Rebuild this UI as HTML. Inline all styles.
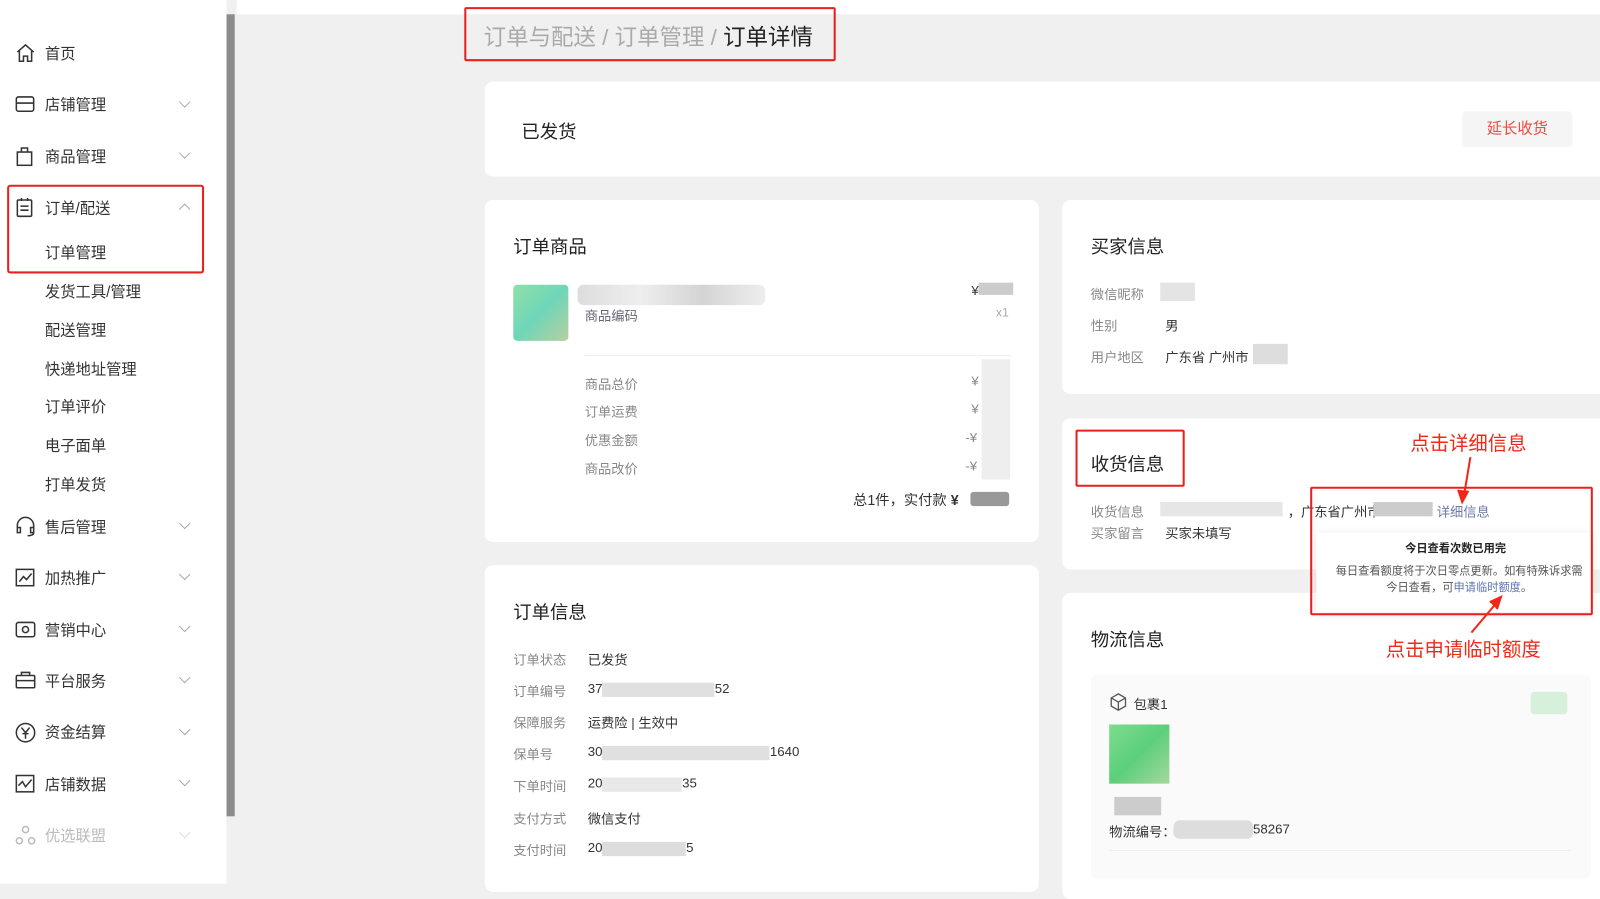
<!DOCTYPE html><html><head><meta charset="utf-8"><style>
*{margin:0;padding:0;box-sizing:border-box}
body{width:1600px;height:866px;overflow:hidden;background:#f0f0f0;font-family:"Liberation Sans","Noto Sans CJK SC",sans-serif;color:#333;position:relative}
#w{position:absolute;left:0;top:0;width:1568px;height:849px;transform:scale(1.0204);transform-origin:0 0;background:#f0f0f0}
.a{position:absolute}
.side{left:0;top:0;width:222px;height:866px;background:#fff}
.bar{left:222px;top:14px;width:8px;height:786px;background:#8c8c8c}
.main{left:232px;top:14px;width:1368px;height:852px;background:#f0f0f0}
.mi{font-size:15px;color:#333}
.card{background:#fff;border-radius:8px}
.t{font-size:18px;color:#222}
.l{font-size:13px;color:#888}
.v{font-size:13px;color:#333}
.blur{background:linear-gradient(90deg,#ddd,#eee,#d4d4d4,#eee);border-radius:6px}
.red{border:2px solid #e82020}
.chev{width:8px;height:8px;border-right:1.3px solid #aaa;border-bottom:1.3px solid #aaa;transform:rotate(45deg)}
</style></head><body><div id="w">
<div class="a side"></div>
<div class="a bar"></div>
<div class="a main"></div>
<svg class="a" style="left:14px;top:42px" width="22" height="20" viewBox="0 0 22 20" fill="none" stroke="#333" stroke-width="1.5"><path d="M3 9 L11 2 L19 9 M5 8 V18 H9 V13 H13 V18 H17 V8"/></svg>
<div class="a mi" style="left:44px;top:42px">首页</div>
<svg class="a" style="left:14px;top:93px" width="22" height="18" fill="none" stroke="#333" stroke-width="1.5"><rect x="2" y="2" width="17" height="14" rx="2"/><path d="M2 8H19"/></svg>
<div class="a mi" style="left:44px;top:92px">店铺管理</div>
<svg class="a" style="left:15px;top:142px" width="20" height="22" fill="none" stroke="#333" stroke-width="1.5"><rect x="2" y="7" width="14" height="13"/><path d="M6 7V3H12V7"/></svg>
<div class="a mi" style="left:44px;top:143px">商品管理</div>
<div class="a red" style="left:7px;top:181px;width:193px;height:87px;border-radius:3px"></div>
<svg class="a" style="left:15px;top:193px" width="20" height="22" fill="none" stroke="#333" stroke-width="1.5"><rect x="2" y="3" width="14" height="16" rx="1"/><path d="M6 1V4M12 1V4M5 9H13M5 13H13"/></svg>
<div class="a mi" style="left:44px;top:193px">订单/配送</div>
<div class="a mi" style="left:44px;top:237px">订单管理</div>
<div class="a mi" style="left:44px;top:275px">发货工具/管理</div>
<div class="a mi" style="left:44px;top:313px">配送管理</div>
<div class="a mi" style="left:44px;top:351px">快递地址管理</div>
<div class="a mi" style="left:44px;top:388px">订单评价</div>
<div class="a mi" style="left:44px;top:426px">电子面单</div>
<div class="a mi" style="left:44px;top:464px">打单发货</div>
<div class="a mi" style="left:44px;top:506px">售后管理</div>
<div class="a mi" style="left:44px;top:556px">加热推广</div>
<div class="a mi" style="left:44px;top:607px">营销中心</div>
<div class="a mi" style="left:44px;top:657px">平台服务</div>
<div class="a mi" style="left:44px;top:707px">资金结算</div>
<div class="a mi" style="left:44px;top:758px">店铺数据</div>
<div class="a mi" style="left:44px;top:808px;color:#bbb">优选联盟</div>
<svg class="a" style="left:14px;top:505px" width="22" height="22" fill="none" stroke="#333" stroke-width="1.5"><path d="M3 13V10A8 8 0 0 1 19 10V13M3 12H6V17H3ZM16 12H19V17H16ZM19 17Q19 20 13 20"/></svg>
<svg class="a" style="left:14px;top:556px" width="22" height="20" fill="none" stroke="#333" stroke-width="1.5"><rect x="2" y="2" width="17" height="16"/><path d="M5 14L9 9L12 12L17 6"/></svg>
<svg class="a" style="left:14px;top:607px" width="22" height="20" fill="none" stroke="#333" stroke-width="1.5"><rect x="2" y="3" width="18" height="14" rx="2"/><circle cx="11" cy="10" r="3"/></svg>
<svg class="a" style="left:14px;top:657px" width="22" height="20" fill="none" stroke="#333" stroke-width="1.5"><rect x="2" y="5" width="18" height="12" rx="1"/><path d="M7 5V2H15V5M2 10H20"/></svg>
<svg class="a" style="left:14px;top:707px" width="22" height="22" fill="none" stroke="#333" stroke-width="1.5"><circle cx="11" cy="11" r="9"/><path d="M7 6L11 11L15 6M11 11V17M8 12H14"/></svg>
<svg class="a" style="left:14px;top:758px" width="22" height="20" fill="none" stroke="#333" stroke-width="1.5"><rect x="2" y="2" width="17" height="16"/><path d="M4 12L8 8L11 13L17 6"/></svg>
<svg class="a" style="left:14px;top:808px" width="22" height="20" fill="none" stroke="#bbb" stroke-width="1.5"><circle cx="11" cy="5" r="3"/><circle cx="5" cy="16" r="3"/><circle cx="17" cy="16" r="3"/></svg>
<div class="a chev" style="left:177px;top:96px"></div>
<div class="a chev" style="left:177px;top:146px"></div>
<div class="a chev" style="left:177px;top:201px;transform:rotate(225deg)"></div>
<div class="a chev" style="left:177px;top:509px"></div>
<div class="a chev" style="left:177px;top:559px"></div>
<div class="a chev" style="left:177px;top:610px"></div>
<div class="a chev" style="left:177px;top:660px"></div>
<div class="a chev" style="left:177px;top:711px"></div>
<div class="a chev" style="left:177px;top:761px"></div>
<div class="a chev" style="left:177px;top:812px;border-color:#ddd"></div>
<div class="a" style="left:232px;top:0;width:1368px;height:14px;background:#fff"></div>
<div class="a red" style="left:455px;top:7px;width:364px;height:53px;border-radius:2px"></div>
<div class="a" style="left:474px;top:19px;font-size:22px;color:#aaa">订单与配送 / 订单管理 / <span style="color:#222">订单详情</span></div>
<div class="a card" style="left:475px;top:80px;width:1100px;height:93px"></div>
<div class="a t" style="left:511px;top:115px">已发货</div>
<div class="a" style="left:1433px;top:109px;width:108px;height:35px;background:#f5f5f5;border-radius:4px;color:#f04b3c;font-size:15px;text-align:center;line-height:35px">延长收货</div>
<div class="a card" style="left:475px;top:196px;width:543px;height:335px"></div>
<div class="a t" style="left:503px;top:228px">订单商品</div>
<div class="a" style="left:503px;top:279px;width:54px;height:55px;border-radius:4px;background:linear-gradient(135deg,#8fe0a8,#6ed6b8,#b9cfa0)"></div>
<div class="a blur" style="left:566px;top:279px;width:184px;height:20px"></div>
<div class="a" style="left:573px;top:299px;font-size:13px;color:#667">商品编码</div>
<div class="a v" style="left:952px;top:277px">¥<span style="display:inline-block;width:34px;height:12px;background:#ccc"></span></div>
<div class="a" style="left:976px;top:299px;font-size:12px;color:#aaa">x1</div>
<div class="a" style="left:573px;top:348px;width:418px;height:1px;background:#eee"></div>
<div class="a l" style="left:573px;top:366px">商品总价</div>
<div class="a l" style="left:573px;top:393px">订单运费</div>
<div class="a l" style="left:573px;top:421px">优惠金额</div>
<div class="a l" style="left:573px;top:449px">商品改价</div>
<div class="a" style="left:962px;top:352px;width:28px;height:118px;background:#eee"></div>
<div class="a l" style="left:952px;top:366px">¥</div><div class="a l" style="left:952px;top:393px">¥</div><div class="a l" style="left:946px;top:421px">-¥</div><div class="a l" style="left:946px;top:449px">-¥</div>
<div class="a" style="left:836px;top:480px;font-size:14px;color:#333">总1件，实付款 <b>¥</b></div>
<div class="a" style="left:951px;top:482px;width:38px;height:14px;background:#999;border-radius:3px"></div>
<div class="a card" style="left:475px;top:554px;width:543px;height:320px"></div>
<div class="a t" style="left:503px;top:586px">订单信息</div>
<div class="a l" style="left:503px;top:636px">订单状态</div><div class="a v" style="left:576px;top:636px">已发货</div>
<div class="a l" style="left:503px;top:667px">订单编号</div><div class="a v" style="left:576px;top:667px">37<span style="display:inline-block;width:110px;height:14px;background:#e0e0e0;vertical-align:middle"></span>52</div>
<div class="a l" style="left:503px;top:698px">保障服务</div><div class="a v" style="left:576px;top:698px">运费险 | 生效中</div>
<div class="a l" style="left:503px;top:729px">保单号</div><div class="a v" style="left:576px;top:729px">30<span style="display:inline-block;width:164px;height:14px;background:#e0e0e0;vertical-align:middle"></span>1640</div>
<div class="a l" style="left:503px;top:760px">下单时间</div><div class="a v" style="left:576px;top:760px">20<span style="display:inline-block;width:78px;height:14px;background:#e8e8e8;vertical-align:middle"></span>35</div>
<div class="a l" style="left:503px;top:792px">支付方式</div><div class="a v" style="left:576px;top:792px">微信支付</div>
<div class="a l" style="left:503px;top:823px">支付时间</div><div class="a v" style="left:576px;top:823px">20<span style="display:inline-block;width:82px;height:14px;background:#ddd;vertical-align:middle"></span>5</div>
<div class="a card" style="left:1041px;top:196px;width:540px;height:190px"></div>
<div class="a t" style="left:1069px;top:228px">买家信息</div>
<div class="a l" style="left:1069px;top:278px">微信昵称</div><div class="a" style="left:1137px;top:277px;width:34px;height:18px;background:#e4e4e4"></div>
<div class="a l" style="left:1069px;top:309px">性别</div><div class="a v" style="left:1142px;top:309px">男</div>
<div class="a l" style="left:1069px;top:340px">用户地区</div><div class="a v" style="left:1142px;top:340px">广东省 广州市</div><div class="a" style="left:1228px;top:337px;width:34px;height:20px;background:#ddd"></div>
<div class="a card" style="left:1041px;top:410px;width:540px;height:148px"></div>
<div class="a red" style="left:1054px;top:421px;width:107px;height:56px;border-radius:2px"></div>
<div class="a t" style="left:1069px;top:441px">收货信息</div>
<div class="a l" style="left:1069px;top:491px">收货信息</div>
<div class="a" style="left:1137px;top:492px;width:120px;height:14px;background:#e6e6e6"></div>
<div class="a v" style="left:1262px;top:491px">，广东省广州市</div>
<div class="a" style="left:1346px;top:492px;width:58px;height:14px;background:#ccc"></div>
<div class="a" style="left:1408px;top:491px;font-size:13px;color:#6a7bab">详细信息</div>
<div class="a l" style="left:1069px;top:512px">买家留言</div><div class="a v" style="left:1142px;top:512px">买家未填写</div>
<div class="a card" style="left:1041px;top:581px;width:540px;height:300px"></div>
<div class="a t" style="left:1069px;top:613px">物流信息</div>
<div class="a" style="left:1069px;top:661px;width:490px;height:200px;background:#fafafa;border-radius:6px"></div>
<svg class="a" style="left:1087px;top:679px" width="18" height="18" fill="none" stroke="#555" stroke-width="1.3"><path d="M9 1L16 5V13L9 17L2 13V5ZM2 5L9 9L16 5M9 9V17"/></svg>
<div class="a v" style="left:1111px;top:680px">包裹1</div>
<div class="a" style="left:1500px;top:678px;width:36px;height:22px;background:#d6f0dc;border-radius:4px"></div>
<div class="a" style="left:1087px;top:710px;width:59px;height:58px;background:linear-gradient(135deg,#7edc8e,#5ccf7a,#a6d89c)"></div>
<div class="a" style="left:1092px;top:781px;width:46px;height:18px;background:#ccc"></div>
<div class="a v" style="left:1087px;top:805px">物流编号：</div>
<div class="a" style="left:1150px;top:804px;width:78px;height:18px;background:#ddd;border-radius:6px"></div>
<div class="a v" style="left:1228px;top:805px">58267</div>
<div class="a" style="left:1087px;top:833px;width:452px;height:1px;background:#eee"></div>
<div class="a" style="left:1290px;top:522px;width:270px;height:78px;background:#fff;box-shadow:0 2px 8px rgba(0,0,0,.12)"></div>
<div class="a red" style="left:1284px;top:477px;width:277px;height:126px;border-radius:2px"></div>
<div class="a" style="left:1377px;top:529px;font-size:11px;font-weight:bold;color:#222">今日查看次数已用完</div>
<div class="a" style="left:1306px;top:552px;font-size:11px;color:#555;line-height:16px;width:248px;text-align:center">每日查看额度将于次日零点更新。如有特殊诉求需今日查看，可<span style="color:#5b73b0">申请临时额度</span>。</div>
<div class="a" style="left:1382px;top:420px;font-size:19px;color:#f02818">点击详细信息</div>
<div class="a" style="left:1358px;top:622px;font-size:19px;color:#f02818">点击申请临时额度</div>
<svg class="a" style="left:1400px;top:440px" width="100" height="190" fill="none" stroke="#f02818" stroke-width="2"><path d="M41 8L34 50"/><path d="M29 40L33 52L39 41" fill="#f02818"/><path d="M42 180L69 148"/><path d="M60 150L71 145L67 157" fill="#f02818"/></svg>
</div></body></html>
